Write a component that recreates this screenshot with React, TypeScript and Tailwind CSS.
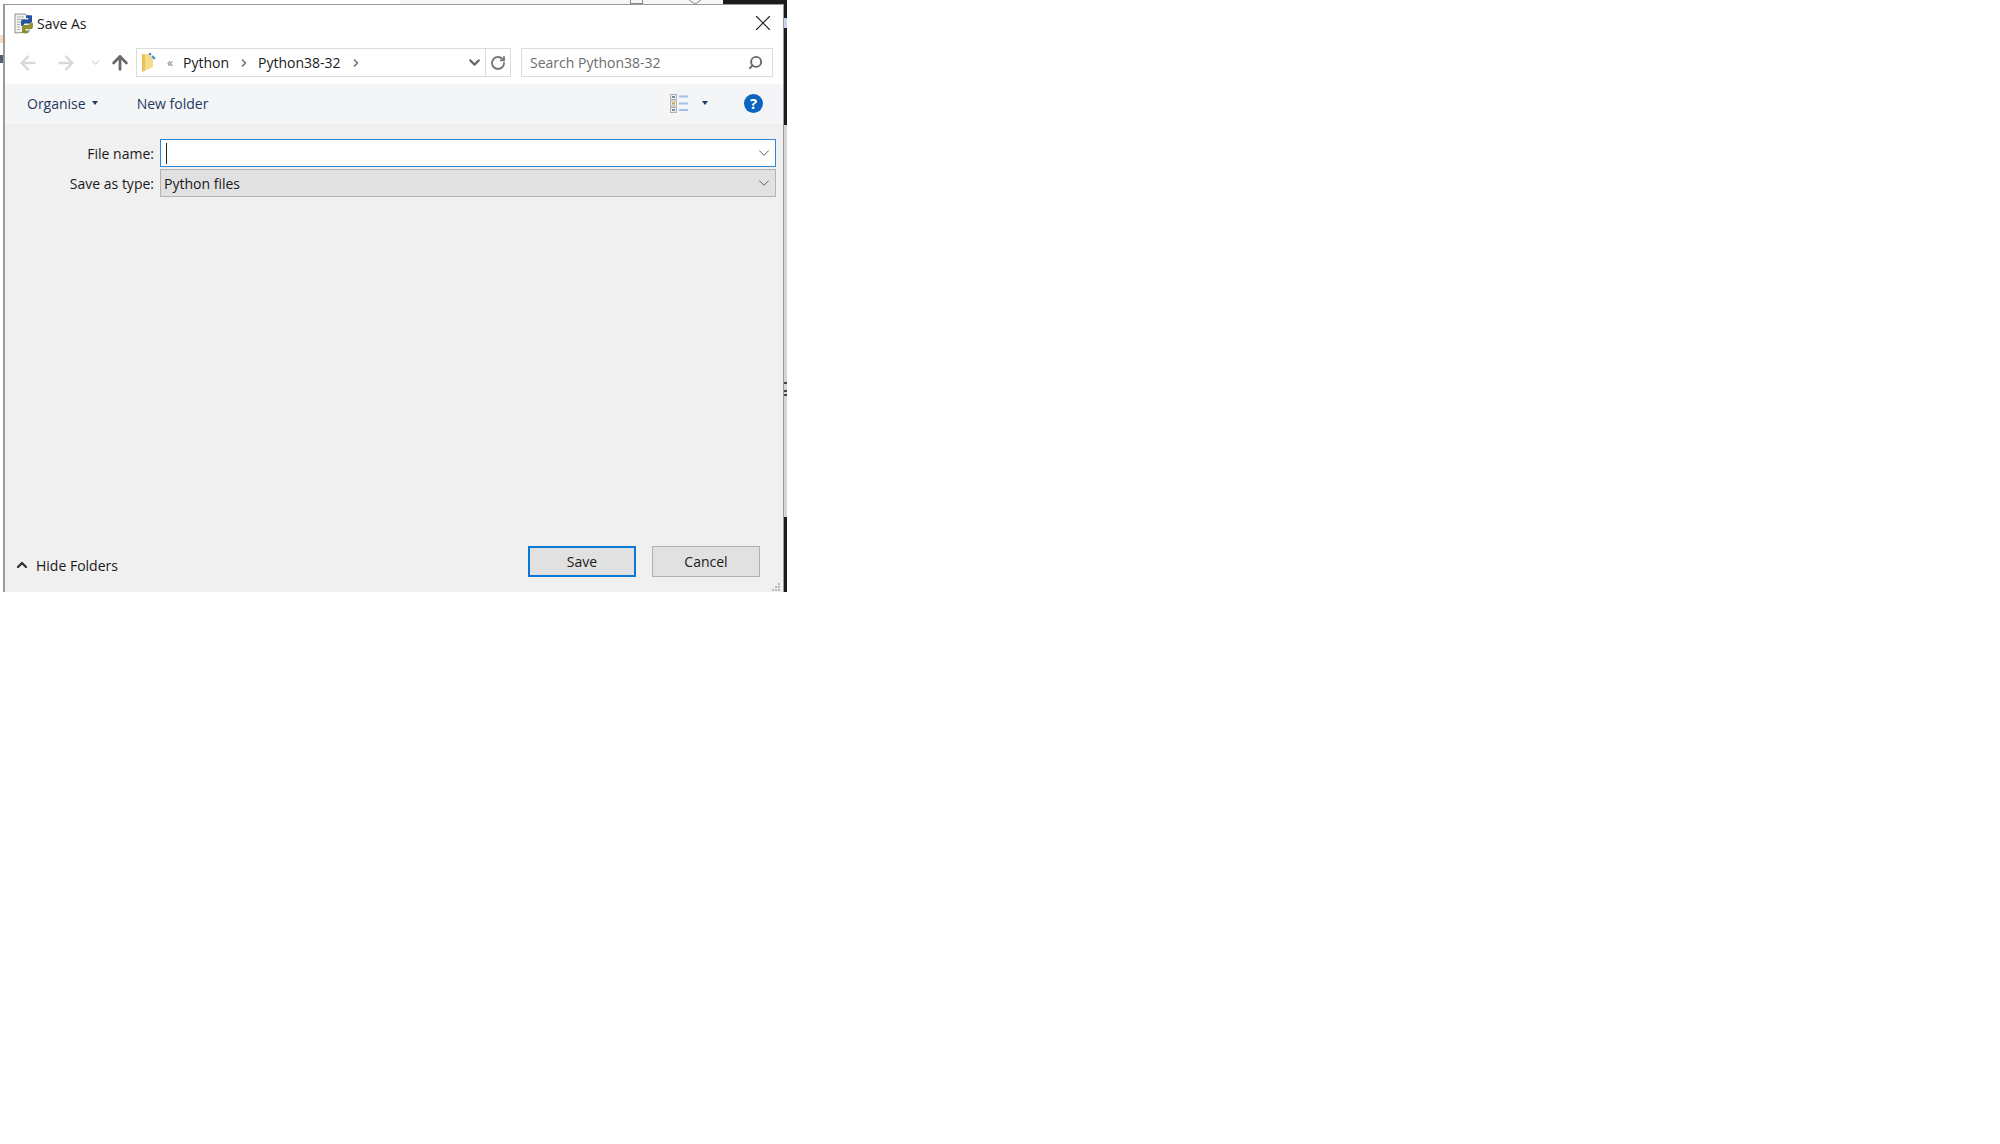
import { ArrowLeft, ArrowRight, ArrowUp, ChevronDown, ChevronRight, ChevronUp, RotateCw, Search, X } from 'lucide-react';

const labelFont = "font-['Open_Sans','Noto_Sans',sans-serif]";

const PythonFileIcon = () => (
  <svg width="20" height="21" viewBox="0 0 20 21">
    <path d="M1 1h10.500l3.500 3.500V19l-14 1z" fill="#f2f2f2" stroke="#8f8f8f" />
    <path d="M3 4h7M3 6.500h8M3 9h5M3 11.500h3M3 14h3M3 16.500h3" stroke="#b0b0b0" />
    <path d="M7 9.500C7 7 8 6.500 10 6.500h4.500V5H12V2.500c2-.500 4-.500 6 0V8c0 1.500-1 2.500-2.500 2.500H11c-1 0-1.500 1-1.500 2.500H7.500C7 12 7 11 7 9.500z" fill="#23509e" />
    <path d="M19 13c0 2.500-1 3-3 3h-4.500v1.500H14V20c-2 .500-4 .500-6 0v-5.500C8 13 9 12 10.500 12H15c1 0 1.500-1 1.500-2.500h2c.5 1 .5 2 .5 3.500z" fill="#8f8f2c" />
  </svg>
);

const FolderIcon = () => (
  <svg width="14" height="19" viewBox="0 0 14 19">
    <path d="M0 1h6l5 4v9l-11 5z" fill="#f7dc88" />
    <path d="M0 1v18l3-1.500V2z" fill="#e8c05c" />
    <path d="M7 0l2 2M10 3l3 3" stroke="#3d8fd6" strokeWidth="2" />
  </svg>
);

const ViewIcon = () => (
  <svg width="19" height="19" viewBox="0 0 19 19">
    <rect x="0.500" y="0.500" width="6" height="5" fill="#eeeeee" stroke="#b0b0b0" />
    <rect x="0.500" y="7" width="6" height="5" fill="#eeeeee" stroke="#b0b0b0" />
    <rect x="0.500" y="13.500" width="6" height="5" fill="#eeeeee" stroke="#b0b0b0" />
    <rect x="2" y="2" width="3" height="2" fill="#7a8aa0" />
    <rect x="2" y="8.500" width="3" height="2" fill="#c8a040" />
    <rect x="2" y="15" width="3" height="2" fill="#7a8aa0" />
    <path d="M9 2.500h9M9 9.500h9M9 16h9" stroke="#9cc0e8" strokeWidth="2" />
  </svg>
);

const ResizeGrip = () => (
  <svg width="10" height="10" viewBox="0 0 10 10" fill="#b8b8b8">
    <rect x="7" y="1" width="2" height="2" />
    <rect x="4" y="4" width="2" height="2" />
    <rect x="7" y="4" width="2" height="2" />
    <rect x="1" y="7" width="2" height="2" />
    <rect x="4" y="7" width="2" height="2" />
    <rect x="7" y="7" width="2" height="2" />
  </svg>
);

export default function App() {
  return (
    <div className={`w-[2000px] h-[1144px] bg-white ${labelFont} text-[14px] text-[#1a1a1a]`}>
      <div className="flex flex-col w-[787px] h-[592px]">
        {/* bits of the window behind the dialog */}
        <div className="flex h-[4px] shrink-0">
          <div className="w-[400px]" />
          <div className="relative w-[323px] bg-[#f6f6f6]">
            <div className="absolute left-[230px] top-0 w-[13px] h-[4px] border-x border-b border-[#8a8a8a]" />
            <svg className="absolute left-[288px] top-0" width="14" height="4" viewBox="0 0 14 4">
              <path d="M1 0l6 4 6-4" fill="none" stroke="#8a8a8a" />
            </svg>
          </div>
          <div className="flex-1 bg-[#1c1c1c]" />
        </div>

        <div className="flex flex-1 min-h-0">
          <div className="flex flex-col w-[3px] shrink-0">
            <div className="h-[31px]" />
            <div className="h-[8px] bg-[#f3dcc0]" />
            <div className="h-[12px]" />
            <div className="h-[8px] bg-[#55606e]" />
          </div>

          <div className="relative flex flex-col w-[781px] border-l-2 border-r border-t border-[#9a9a9a] bg-[#f0f0f0]">
            <div className="flex items-center justify-between h-[36px] bg-white pl-[9px] pr-[7px]">
              <div className="flex items-center gap-[3px]">
                <PythonFileIcon />
                <span>Save As</span>
              </div>
              <X size={26} strokeWidth={1} className="text-[#222]" />
            </div>

            <div className="flex items-start h-[43px] bg-white pt-[7px] pl-[12px]">
              <div className="flex items-center h-[29px]">
                <ArrowLeft size={22} strokeWidth={2.500} className="text-[#d8d8d8]" />
                <ArrowRight size={22} strokeWidth={2.500} className="ml-[16px] text-[#d8d8d8]" />
                <ChevronDown size={13} strokeWidth={2.500} className="ml-[12px] text-[#d8d8d8]" />
                <ArrowUp size={22} strokeWidth={3} className="ml-[7px] text-[#6a6a6a]" />
              </div>
              <div className="flex items-center ml-[5px] w-[350px] h-[29px] border border-[#dcdcdc] pl-[5px]">
                <FolderIcon />
                <span className="ml-[11px] text-[12px] leading-none text-[#777]">«</span>
                <span className="ml-[10px]">Python</span>
                <ChevronRight size={12} strokeWidth={3.500} className="ml-[9px] text-[#777]" />
                <span className="ml-[8px]">Python38-32</span>
                <ChevronRight size={12} strokeWidth={3.500} className="ml-[9px] text-[#777]" />
                <ChevronDown size={17} strokeWidth={3} className="ml-auto mr-[2px] text-[#666]" />
              </div>
              <div className="flex items-center justify-center w-[25px] h-[29px] border border-l-0 border-[#dcdcdc]">
                <RotateCw size={16} strokeWidth={2.800} className="text-[#777]" />
              </div>
              <div className="flex items-center justify-between ml-[10px] w-[252px] h-[29px] border border-[#dcdcdc] pl-[8px] pr-[9px] text-[#6d6d6d]">
                <span>Search Python38-32</span>
                <Search size={15} strokeWidth={3} className="-scale-x-100 text-[#666]" />
              </div>
            </div>

            <div className="flex items-center h-[41px] bg-[#f4f5f7] border-b border-[#ececec] pb-[2px] pl-[22px] text-[#1f3a5f]">
              <span>Organise</span>
              <span className="ml-[6px] w-0 h-0 border-x-[3px] border-x-transparent border-t-[4px] border-t-[#1f3a5f]" />
              <span className="ml-[39px]">New folder</span>
              <div className="ml-auto flex items-center">
                <ViewIcon />
                <span className="ml-[13px] w-0 h-0 border-x-[3.500px] border-x-transparent border-t-[4px] border-t-[#1f3a5f]" />
                <span className="flex items-center justify-center ml-[36px] mr-[20px] w-[19px] h-[19px] rounded-full bg-[#0a64c0] text-white text-[15px] font-bold leading-none">?</span>
              </div>
            </div>

            <div className="flex items-center h-[28px] mt-[14px]">
              <span className="w-[149px] text-right">File name:</span>
              <div className="flex items-center ml-[6px] w-[616px] h-[28px] border-[1.500px] border-[#2c86d6] bg-white pl-[5px] pr-[2px]">
                <span className="w-px h-[21px] bg-[#222]" />
                <ChevronDown size={18} strokeWidth={1.200} className="ml-auto text-[#555]" />
              </div>
            </div>
            <div className="flex items-center h-[28px] mt-[2px]">
              <span className="w-[149px] text-right">Save as type:</span>
              <div className="flex items-center ml-[6px] w-[616px] h-[28px] border border-[#b4b4b4] bg-[#e1e1e1] pl-[3px] pr-[2px]">
                <span>Python files</span>
                <ChevronDown size={18} strokeWidth={1.200} className="ml-auto text-[#555]" />
              </div>
            </div>

            <div className="flex-1" />

            <div className="flex items-start h-[46px]">
              <ChevronUp size={16} strokeWidth={3.500} className="ml-[9px] mt-[11px] text-[#333]" />
              <span className="ml-[6px] mt-[9px]">Hide Folders</span>
              <button className="ml-auto w-[108px] h-[31px] border-2 border-[#0b78d6] bg-[#e1e1e1]">Save</button>
              <button className="ml-[16px] mr-[23px] w-[108px] h-[31px] border border-[#b0b0b0] bg-[#e1e1e1]">Cancel</button>
            </div>
            <div className="absolute right-[2px] bottom-0">
              <ResizeGrip />
            </div>
          </div>

          <div className="flex flex-col flex-1">
            <div className="h-[14px] bg-[#1c1c1c]" />
            <div className="h-[10px] bg-[#c8d4ee]" />
            <div className="h-[97px] bg-[#1c1c1c]" />
            <div className="h-[257px] bg-[#d6d6d6]" />
            <div className="h-[2px] bg-[#444]" />
            <div className="h-[6px] bg-[#d6d6d6]" />
            <div className="h-[2px] bg-[#444]" />
            <div className="h-[2px] bg-[#d6d6d6]" />
            <div className="h-[2px] bg-[#444]" />
            <div className="h-[121px] bg-[#d6d6d6]" />
            <div className="flex-1 bg-[#1c1c1c]" />
          </div>
        </div>
      </div>
    </div>
  );
}
